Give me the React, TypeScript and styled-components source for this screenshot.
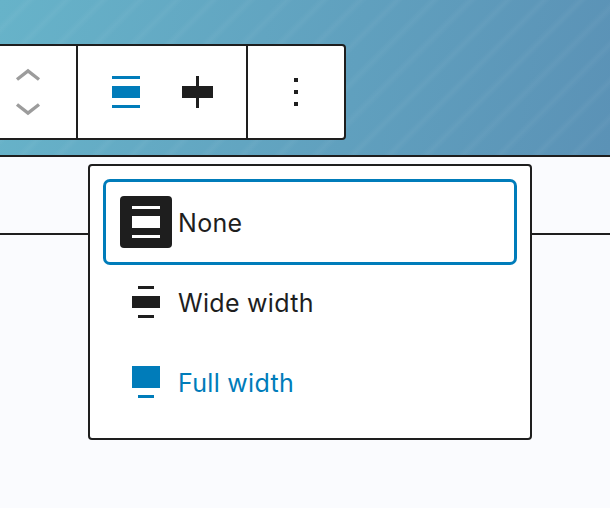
import styled, { createGlobalStyle } from "styled-components"

const GlobalStyle = createGlobalStyle`
  html, body {
    margin: 0;
    padding: 0;
    background: #fafbfe;
    overflow: hidden;
  }
  body {
    width: 610px;
    height: 508px;
    font-family: Inter, "Liberation Sans", sans-serif;
  }
`

function NoneIcon() {
  return (
    <svg width="52" height="52" viewBox="0 0 52 52">
      <rect x="12" y="10" width="28" height="3" fill="currentColor" />
      <rect x="12" y="20" width="28" height="12" fill="currentColor" />
      <rect x="12" y="39" width="28" height="3" fill="currentColor" />
    </svg>
  )
}

function WideIcon() {
  return (
    <svg width="52" height="52" viewBox="0 0 52 52">
      <rect x="18" y="10" width="16" height="3" fill="currentColor" />
      <rect x="12" y="20" width="28" height="12" fill="currentColor" />
      <rect x="18" y="39" width="16" height="3" fill="currentColor" />
    </svg>
  )
}

function FullIcon() {
  return (
    <svg width="52" height="52" viewBox="0 0 52 52">
      <rect x="12" y="10" width="28" height="22" fill="currentColor" />
      <rect x="18" y="39" width="16" height="3" fill="currentColor" />
    </svg>
  )
}

function CenterIcon() {
  return (
    <svg width="52" height="52" viewBox="0 0 52 52">
      <rect x="10" y="20" width="31" height="12" fill="currentColor" />
      <rect x="24" y="10" width="3" height="32" fill="currentColor" />
    </svg>
  )
}

function MoverIcon() {
  return (
    <svg width="26" height="48" viewBox="0 0 26 48" fill="none" stroke="#9c9c9c" strokeWidth="3.4">
      <path d="M2 11.5 L13 3 L24 11.5" />
      <path d="M2 36.5 L13 45 L24 36.5" />
    </svg>
  )
}

function DotsIcon() {
  return (
    <svg width="4" height="28" viewBox="0 0 4 28">
      <rect x="0" y="0" width="4" height="4" fill="currentColor" />
      <rect x="0" y="12" width="4" height="4" fill="currentColor" />
      <rect x="0" y="24" width="4" height="4" fill="currentColor" />
    </svg>
  )
}

function App() {
  return (
    <>
      <GlobalStyle />
      <Page>
        <Cover>
          <Toolbar>
            <MoverGroup>
              <MoverIcon />
            </MoverGroup>
            <AlignGroup>
              <ToolButton $active>
                <NoneIcon />
              </ToolButton>
              <ToolButton>
                <CenterIcon />
              </ToolButton>
            </AlignGroup>
            <MoreGroup>
              <DotsIcon />
            </MoreGroup>
          </Toolbar>
        </Cover>
        <Separator />
        <Menu>
          <MenuItem $selected>
            <IconBox $selected>
              <NoneIcon />
            </IconBox>
            <Label>None</Label>
          </MenuItem>
          <MenuItem>
            <IconBox>
              <WideIcon />
            </IconBox>
            <Label>Wide width</Label>
          </MenuItem>
          <MenuItem $accent>
            <IconBox>
              <FullIcon />
            </IconBox>
            <Label>Full width</Label>
          </MenuItem>
        </Menu>
      </Page>
    </>
  )
}

const Page = styled.div`
  position: relative;
  width: 610px;
  height: 508px;
  overflow: hidden;
  background: #fafbfe;
`

const Cover = styled.div`
  box-sizing: border-box;
  height: 157px;
  padding-top: 44px;
  border-bottom: 2px solid #1e1e1e;
  background:
    repeating-linear-gradient(
      135deg,
      rgba(255, 255, 255, 0) 0px,
      rgba(255, 255, 255, 0) 16px,
      rgba(255, 255, 255, 0.04) 21px,
      rgba(255, 255, 255, 0) 26px
    ),
    linear-gradient(100deg, #67b3c9 0%, #5b92b6 100%);
`

const Toolbar = styled.div`
  display: flex;
  box-sizing: border-box;
  width: 366px;
  height: 96px;
  margin-left: -20px;
  border: 2px solid #1e1e1e;
  border-radius: 4px;
  background: #fff;
  color: #1e1e1e;
`

const MoverGroup = styled.div`
  display: flex;
  box-sizing: border-box;
  align-items: center;
  justify-content: center;
  width: 96px;
  padding-right: 2px;
  border-right: 2px solid #1e1e1e;
`

const AlignGroup = styled.div`
  display: flex;
  align-items: center;
  padding: 0 12px;
  border-right: 2px solid #1e1e1e;
`

const ToolButton = styled.div<{ $active?: boolean }>`
  display: flex;
  align-items: center;
  justify-content: center;
  width: 72px;
  color: ${(p) => (p.$active ? "#007cba" : "#1e1e1e")};
`

const MoreGroup = styled.div`
  display: flex;
  flex: 1;
  align-items: center;
  justify-content: center;
`

const Separator = styled.div`
  height: 2px;
  margin-top: 76px;
  background: #1e1e1e;
`

const Menu = styled.div`
  position: absolute;
  top: 164px;
  left: 88px;
  box-sizing: border-box;
  width: 444px;
  height: 276px;
  padding: 16px;
  border: 2px solid #1e1e1e;
  border-radius: 4px;
  background: #fff;
`

const MenuItem = styled.div<{ $selected?: boolean; $accent?: boolean }>`
  display: flex;
  align-items: center;
  gap: 6px;
  height: 80px;
  padding-left: 14px;
  border-radius: 4px;
  color: ${(p) => (p.$accent ? "#007cba" : "#1e1e1e")};
  box-shadow: ${(p) => (p.$selected ? "0 0 0 3px #007cba" : "none")};
`

const IconBox = styled.span<{ $selected?: boolean }>`
  display: flex;
  width: 52px;
  height: 52px;
  border-radius: 4px;
  background: ${(p) => (p.$selected ? "#1e1e1e" : "transparent")};
  color: ${(p) => (p.$selected ? "#fff" : "inherit")};
`

const Label = styled.span`
  padding-top: 2px;
  font-size: 25px;
  letter-spacing: 0.3px;
`

export default App
